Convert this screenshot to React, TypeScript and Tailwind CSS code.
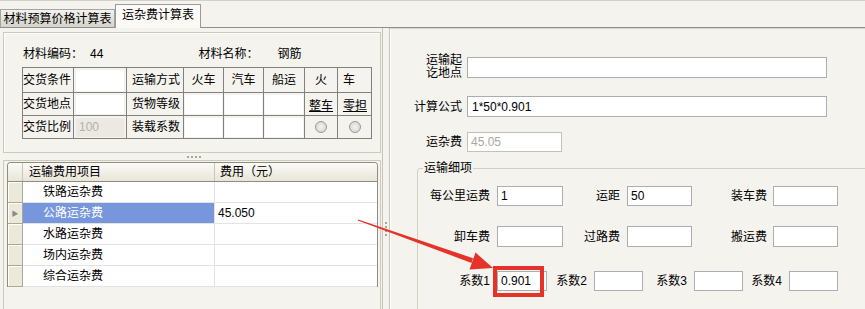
import React from "react";

const Box = ({ className = "", children }: { className?: string; children?: React.ReactNode }) => (
  <div className={`flex shrink-0 items-center border border-[#abadb3] bg-white pl-[3px] ${className}`}>{children}</div>
);

const Dots = ({ vertical = false }: { vertical?: boolean }) => (
  <div className={`flex gap-[2px] ${vertical ? "flex-col" : "flex-row"}`}>
    <div className="h-[2px] w-[2px] bg-[#a9a596]" />
    <div className="h-[2px] w-[2px] bg-[#a9a596]" />
    <div className="h-[2px] w-[2px] bg-[#a9a596]" />
    <div className="h-[2px] w-[2px] bg-[#a9a596]" />
  </div>
);

const Radio = () => (
  <div className="mx-auto h-[12px] w-[12px] rounded-full border border-[#9a9a9a] bg-radial from-[#f4f4f4] to-[#cfcfcf]" />
);

const cell = "border border-[#808080] p-0";

const rows = [
  { name: "铁路运杂费", fee: "" },
  { name: "公路运杂费", fee: "45.050", sel: true },
  { name: "水路运杂费", fee: "" },
  { name: "场内运杂费", fee: "" },
  { name: "综合运杂费", fee: "" },
];

export default function App() {
  return (
    <div className="relative h-[309px] w-[865px] overflow-hidden bg-[#f4f3ee] font-['Liberation_Sans','Noto_Sans_CJK_SC',sans-serif] text-[12px] leading-[14px] text-black">
      {/* tabs */}
      <div className="flex h-[28px] items-end border-b border-[#8e8e8e] border-t border-t-[#d2d0c8]">
        <div className="flex h-[18px] w-[115px] items-center justify-center border border-b-0 border-[#a3a3a3] bg-linear-to-b from-[#f3f2ee] to-[#d6d3ca]">
          材料预算价格计算表
        </div>
        <div className="-mb-px flex h-[24px] w-[86px] items-center justify-center border border-b-0 border-[#9a9a9a] bg-[#fbfaf7] pb-[3px]">
          运杂费计算表
        </div>
      </div>

      <div className="flex h-[281px]">
        {/* left panel */}
        <div className="flex w-[382px] shrink-0 flex-col pl-[3px] pt-[4px]">
          <div className="h-[121px] w-[378px] shrink-0 border border-[#cdc9bb] shadow-[inset_1px_1px_0_#ffffff]">
            <div className="ml-[19px] mt-[14px] flex h-[14px] items-center">
              <span>材料编码：</span>
              <span className="ml-[7px]">44</span>
              <span className="ml-[95px]">材料名称：</span>
              <span className="ml-[19px]">钢筋</span>
            </div>
            <table className="ml-[18px] mt-[6px] table-fixed border-collapse">
              <colgroup>
                <col className="w-[51px]" />
                <col className="w-[53px]" />
                <col className="w-[57px]" />
                <col className="w-[40px]" />
                <col className="w-[40px]" />
                <col className="w-[41px]" />
                <col className="w-[33px]" />
                <col className="w-[34px]" />
              </colgroup>
              <tbody>
                <tr className="h-[25px]">
                  <td className={cell}>交货条件</td>
                  <td className={cell}><div className="mx-[2px] h-[21px] bg-white" /></td>
                  <td className={`${cell} pl-[5px]`}>运输方式</td>
                  <td className={`${cell} text-center`}>火车</td>
                  <td className={`${cell} text-center`}>汽车</td>
                  <td className={`${cell} text-center`}>船运</td>
                  <td className={`${cell} text-center`}>火</td>
                  <td className={`${cell} pl-[5px]`}>车</td>
                </tr>
                <tr className="h-[23px]">
                  <td className={cell}>交货地点</td>
                  <td className={cell}><div className="mx-[2px] h-[19px] bg-white" /></td>
                  <td className={`${cell} pl-[5px]`}>货物等级</td>
                  <td className={cell}><div className="mx-[1px] h-[19px] bg-white" /></td>
                  <td className={cell}><div className="mx-[1px] h-[19px] bg-white" /></td>
                  <td className={cell}><div className="mx-[1px] h-[19px] bg-white" /></td>
                  <td className={`${cell} pt-[4px] text-center`}><span className="underline">整车</span></td>
                  <td className={`${cell} pl-[5px] pt-[4px]`}><span className="underline">零担</span></td>
                </tr>
                <tr className="h-[23px]">
                  <td className={cell}>交货比例</td>
                  <td className={cell}>
                    <div className="mx-[2px] flex h-[19px] items-center bg-[#ebe9e1] pl-[3px] text-[#b3b1aa]">100</div>
                  </td>
                  <td className={`${cell} pl-[5px]`}>装载系数</td>
                  <td className={cell}><div className="mx-[1px] h-[19px] bg-white" /></td>
                  <td className={cell}><div className="mx-[1px] h-[19px] bg-white" /></td>
                  <td className={cell}><div className="mx-[1px] h-[19px] bg-white" /></td>
                  <td className={cell}><Radio /></td>
                  <td className={cell}><Radio /></td>
                </tr>
              </tbody>
            </table>
          </div>

          <div className="flex h-[7px] shrink-0 items-center justify-center pl-[2px]">
            <Dots />
          </div>

          <div className="w-[378px] flex-1 border border-b-0 border-[#cdc9bb] pl-[3px] pt-[1px]">
            <div className="w-[371px] overflow-hidden rounded-t-[4px] border-x border-t border-[#8f8d80]">
              <div className="flex h-[19px] border-b border-[#8f8d80] bg-linear-to-b from-[#fbfaf6] to-[#e8e5d8]">
                <div className="w-[15px] border-r border-[#c9c6b6]" />
                <div className="flex w-[192px] items-center border-r border-[#c9c6b6] pl-[6px]">运输费用项目</div>
                <div className="flex flex-1 items-center pl-[5px]">费用（元）</div>
              </div>
              {rows.map((r) => (
                <div key={r.name} className="flex h-[21px]">
                  <div className="flex w-[15px] items-center justify-center border-r border-b border-[#aca899] bg-[#ece9d8] shadow-[inset_1px_1px_0_#ffffff]">
                    {r.sel && <span className="text-[7px] leading-[7px] text-[#8b8b8b]">▶</span>}
                  </div>
                  <div
                    className={`flex w-[192px] items-center border-r border-b border-[#e3e3e3] pl-[20px] ${
                      r.sel ? "bg-[#7896dc] text-white" : "bg-white"
                    }`}
                  >
                    {r.name}
                  </div>
                  <div className="flex flex-1 items-center border-b border-[#e3e3e3] bg-white pl-[3px]">{r.fee}</div>
                </div>
              ))}
            </div>
          </div>
        </div>

        {/* vertical splitter */}
        <div className="flex w-[8px] shrink-0 flex-col items-center border-x border-[#c8c4b5] pt-[194px]">
          <Dots vertical />
        </div>

        {/* right panel */}
        <div className="flex flex-1 flex-col border-t border-[#d8d5c9] shadow-[inset_1px_0_0_#ffffff]">
          <div className="mt-[27px] flex h-[22px] items-center">
            <div className="flex w-[72px] flex-col items-end">
              <div className="h-[13px] leading-[13px]">运输起</div>
              <div className="h-[13px] leading-[13px]">讫地点</div>
            </div>
            <Box className="ml-[5px] h-[21px] w-[360px]" />
          </div>
          <div className="mt-[18px] flex items-center">
            <div className="w-[72px] text-right">计算公式</div>
            <Box className="ml-[5px] h-[21px] w-[360px] pl-[4px]">1*50*0.901</Box>
          </div>
          <div className="mt-[15px] flex items-center">
            <div className="w-[72px] text-right">运杂费</div>
            <Box className="ml-[5px] h-[20px] w-[95px] border-[#c4c2b8] bg-[#ebe9e1] text-[#aaa8a0]">45.05</Box>
          </div>

          <fieldset className="ml-[27px] mt-[9px] h-[200px] w-[470px] shrink-0 rounded-[3px] border border-[#d3d0c2]">
            <legend className="ml-[5px] px-[1px] leading-[14px]">运输细项</legend>
            <div className="mt-[11px] flex items-center">
              <div className="w-[72px] text-right">每公里运费</div>
              <Box className="ml-[7px] h-[20px] w-[66px]">1</Box>
              <div className="w-[57px] text-right">运距</div>
              <Box className="ml-[7px] h-[20px] w-[65px]">50</Box>
              <div className="w-[75px] text-right">装车费</div>
              <Box className="ml-[6px] h-[20px] w-[65px]" />
            </div>
            <div className="mt-[20px] flex items-center">
              <div className="w-[72px] text-right">卸车费</div>
              <Box className="ml-[7px] h-[21px] w-[66px]" />
              <div className="w-[57px] text-right">过路费</div>
              <Box className="ml-[7px] h-[21px] w-[65px]" />
              <div className="w-[75px] text-right">搬运费</div>
              <Box className="ml-[6px] h-[21px] w-[65px]" />
            </div>
            <div className="mt-[24px] flex items-center">
              <div className="w-[72px] text-right">系数1</div>
              <Box className="ml-[7px] h-[20px] w-[50px]">0.901</Box>
              <div className="w-[40px] text-right">系数2</div>
              <Box className="ml-[7px] h-[20px] w-[49px]" />
              <div className="w-[44px] text-right">系数3</div>
              <Box className="ml-[7px] h-[20px] w-[49px]" />
              <div className="w-[39px] text-right">系数4</div>
              <Box className="ml-[7px] h-[20px] w-[49px]" />
            </div>
          </fieldset>
        </div>
      </div>

      {/* annotation: red box and arrow */}
      <div className="absolute left-[493px] top-[266px] h-[31px] w-[51px] border-[4px] border-[#e5332a]" />
      <svg className="absolute left-0 top-0" width="865" height="309" viewBox="0 0 865 309">
        <polygon points="357.8,220.5 358.2,219.5 473.1,258.2 471.5,262.9" fill="#e5332a" />
        <polygon points="475.5,252.5 493,268 469.5,269.5" fill="#e5332a" />
      </svg>
    </div>
  );
}
